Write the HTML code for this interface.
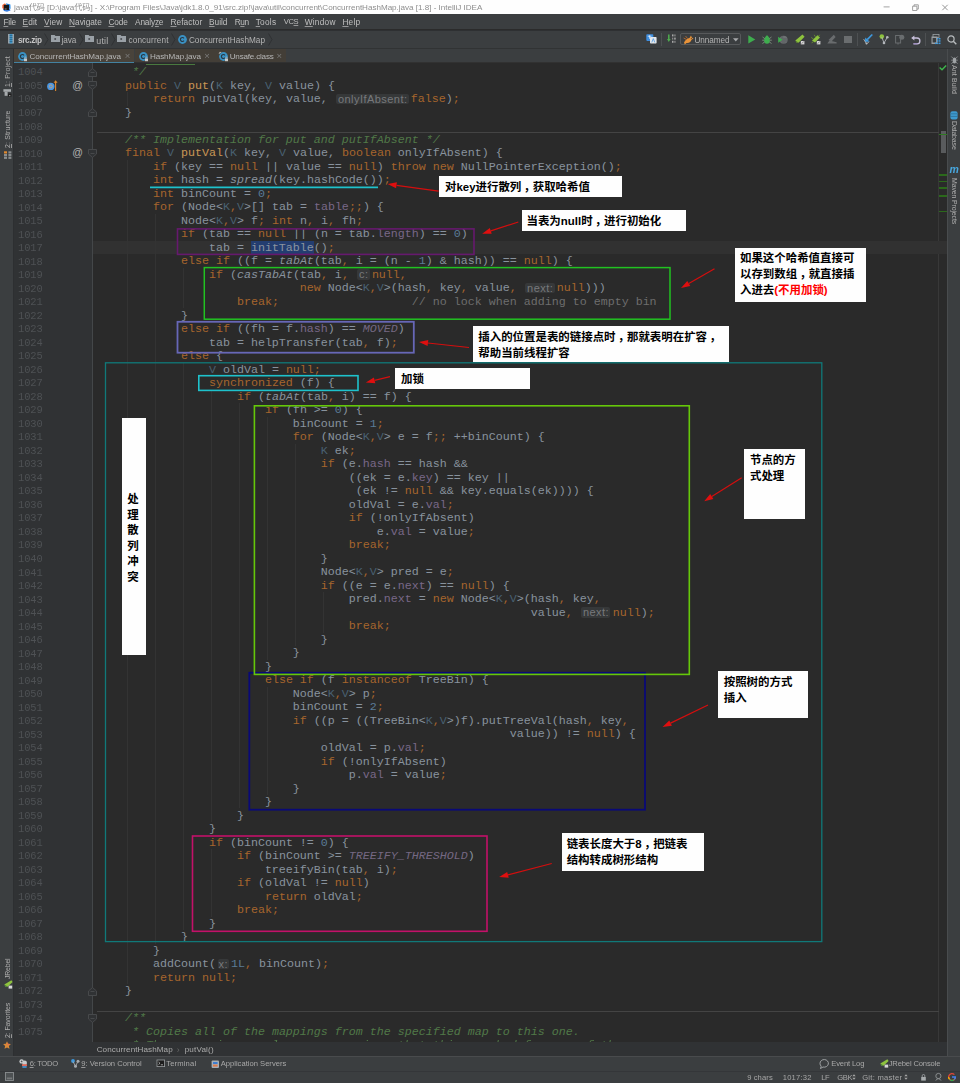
<!DOCTYPE html>
<html lang="zh">
<head>
<meta charset="utf-8">
<title>ConcurrentHashMap.java - IntelliJ IDEA</title>
<style>
*{box-sizing:border-box;margin:0;padding:0}
html,body{width:960px;height:1083px;overflow:hidden;background:#2b2b2b}
body{position:relative;font-family:"Liberation Sans","Noto Sans CJK SC",sans-serif;font-size:8.2px;color:#bbb}
#root{position:absolute;left:0;top:0;width:960px;height:1083px;opacity:.999}
.abs{position:absolute}
.ft{position:absolute;white-space:nowrap;line-height:12px;height:12px}
.ft u,.vt u{text-decoration-thickness:0.7px;text-underline-offset:1px;text-decoration-color:rgba(190,190,190,.7)}
#title{left:0;top:0;width:960px;height:14.2px;background:#fff}
#menu{left:0;top:14.2px;width:960px;height:15.3px;background:#3c3f41}
#nav{left:0;top:29.5px;width:960px;height:19px;background:#3c3f41;border-top:1px solid #2f3133;border-bottom:1px solid #323435}
#tabs{left:0;top:48.5px;width:960px;height:14.2px;background:#3c3f41;border-bottom:1px solid #323232}
.tab{position:absolute;top:0;height:13.4px;background:#4a443c}
#lstrip{left:0;top:48.5px;width:14px;height:1007.5px;background:#3c3f41;border-right:1px solid #2e3032}
#rstrip{left:947px;top:48.5px;width:13px;height:1007.5px;background:#3c3f41;border-left:1px solid #4a4d4f}
.vt{position:absolute;white-space:nowrap;line-height:10px;height:10px;color:#b0b0b0;transform-origin:0 0}
#gutter{left:14px;top:62.7px;width:79px;height:980px;background:#313335;border-right:1px solid #45484a}
#editor{left:93px;top:62.7px;width:846px;height:980px;background:#2b2b2b}
#scroll{left:938.3px;top:62.7px;width:8.7px;height:980px;background:#2b2b2b;border-left:1px solid #393939}
.ln{position:absolute;left:14px;width:28.6px;text-align:right;font-family:"Liberation Mono",monospace;font-size:10.4px;line-height:13.5px;height:13.5px;color:#4f5255;letter-spacing:-0.1px}
.cl{position:absolute;left:97px;font-family:"Liberation Mono",monospace;font-size:11.667px;line-height:13.5px;height:13.5px;color:#a3b0be;white-space:pre;opacity:.79}
.k{color:#c8772f}.t{color:#537186}.m{color:#f2b562}.i{font-style:italic}
.f{color:#8f7aa2}.c{color:#8a7a9c;font-style:italic}.n{color:#6892b4}
.d{color:#5d8f52;font-style:italic}.l{color:#808080}
.s{background:#214283}
.h{display:inline-block;height:13.5px;vertical-align:top;position:relative}
.h b{position:absolute;left:1.6px;right:2.3px;top:0.4px;height:10.6px;background:#3b3d3f;border-radius:2px;color:#8d8f92;font:normal 11px/10.8px "Liberation Sans",sans-serif;letter-spacing:0.45px;text-indent:0.4px;text-align:center;white-space:nowrap}
.fold{position:absolute}
#crumb{left:14px;top:1042px;width:933px;height:14px;background:#313335}
#tools{left:0;top:1056px;width:960px;height:14.5px;background:#3c3f41;border-top:1px solid #4a4c4e}
#status{left:0;top:1070.5px;width:960px;height:12.5px;background:#3c3f41;border-top:1px solid #35373a}
.note{position:absolute;background:#fff;color:#000;font-family:"Liberation Sans","Noto Sans CJK SC",sans-serif;font-weight:bold;font-size:11.45px;line-height:15.75px;white-space:nowrap;box-sizing:content-box}
.cm{position:relative;left:2.5px}
#ov{left:0;top:0;width:960px;height:1083px;pointer-events:none}
.ic{position:absolute;overflow:visible}
</style>
</head>
<body>
<div id="root">
<div id="title" class="abs"></div>
<div id="menu" class="abs"></div>
<div id="nav" class="abs"></div>
<div id="tabs" class="abs">
<div class="tab" style="left:14px;width:120.4px"></div>
<div class="tab" style="left:135px;width:79.5px;background:#443f38"></div>
<div class="tab" style="left:215px;width:71px;background:#443f38"></div>
<div class="abs" style="left:14px;top:13.2px;width:120.4px;height:1.1px;background:#4483a2"></div>
</div>
<div id="lstrip" class="abs"></div>
<div id="rstrip" class="abs"></div>
<div id="gutter" class="abs"></div>
<div id="editor" class="abs"></div>
<div id="scroll" class="abs"></div>
<div class="abs" style="left:93px;top:240.75px;width:854px;height:13.52px;background:#323232"></div>
<div class="abs" style="left:97px;top:131.80px;width:842px;height:1px;background:#454545"></div>
<div class="abs" style="left:97px;top:1011.30px;width:842px;height:1px;background:#454545"></div>
<div class="abs" style="left:126.5px;top:92.18px;width:1px;height:13.52px;background:#343434"></div>
<div class="abs" style="left:126.5px;top:159.75px;width:1px;height:824.41px;background:#343434"></div>
<div class="abs" style="left:154.5px;top:213.82px;width:1px;height:729.81px;background:#343434"></div>
<div class="abs" style="left:182.5px;top:267.88px;width:1px;height:40.55px;background:#343434"></div>
<div class="abs" style="left:182.5px;top:362.48px;width:1px;height:567.63px;background:#343434"></div>
<div class="abs" style="left:210.5px;top:389.51px;width:1px;height:432.48px;background:#343434"></div>
<div class="abs" style="left:238.5px;top:403.02px;width:1px;height:405.45px;background:#343434"></div>
<div class="abs" style="left:266.5px;top:416.54px;width:1px;height:243.27px;background:#343434"></div>
<div class="abs" style="left:294.5px;top:443.57px;width:1px;height:202.72px;background:#343434"></div>
<div class="abs" style="left:322.5px;top:592.24px;width:1px;height:40.54px;background:#343434"></div>
<div class="abs" style="left:266.5px;top:686.84px;width:1px;height:108.12px;background:#343434"></div>
<div class="abs" style="left:210.5px;top:849.02px;width:1px;height:67.58px;background:#343434"></div>
<div class="abs" style="left:146px;top:63.5px;width:49px;height:1px;background:#4a7a40"></div>
<div class="ln" style="top:66.45px">1004</div>
<div class="ln" style="top:79.97px">1005</div>
<div class="ln" style="top:93.48px">1006</div>
<div class="ln" style="top:107.00px">1007</div>
<div class="ln" style="top:120.51px">1008</div>
<div class="ln" style="top:134.03px">1009</div>
<div class="ln" style="top:147.54px">1010</div>
<div class="ln" style="top:161.05px">1011</div>
<div class="ln" style="top:174.57px">1012</div>
<div class="ln" style="top:188.09px">1013</div>
<div class="ln" style="top:201.60px">1014</div>
<div class="ln" style="top:215.12px">1015</div>
<div class="ln" style="top:228.63px">1016</div>
<div class="ln" style="top:242.14px">1017</div>
<div class="ln" style="top:255.66px">1018</div>
<div class="ln" style="top:269.18px">1019</div>
<div class="ln" style="top:282.69px">1020</div>
<div class="ln" style="top:296.20px">1021</div>
<div class="ln" style="top:309.72px">1022</div>
<div class="ln" style="top:323.24px">1023</div>
<div class="ln" style="top:336.75px">1024</div>
<div class="ln" style="top:350.27px">1025</div>
<div class="ln" style="top:363.78px">1026</div>
<div class="ln" style="top:377.30px">1027</div>
<div class="ln" style="top:390.81px">1028</div>
<div class="ln" style="top:404.32px">1029</div>
<div class="ln" style="top:417.84px">1030</div>
<div class="ln" style="top:431.36px">1031</div>
<div class="ln" style="top:444.87px">1032</div>
<div class="ln" style="top:458.39px">1033</div>
<div class="ln" style="top:471.90px">1034</div>
<div class="ln" style="top:485.42px">1035</div>
<div class="ln" style="top:498.93px">1036</div>
<div class="ln" style="top:512.45px">1037</div>
<div class="ln" style="top:525.96px">1038</div>
<div class="ln" style="top:539.48px">1039</div>
<div class="ln" style="top:552.99px">1040</div>
<div class="ln" style="top:566.51px">1041</div>
<div class="ln" style="top:580.02px">1042</div>
<div class="ln" style="top:593.54px">1043</div>
<div class="ln" style="top:607.05px">1044</div>
<div class="ln" style="top:620.57px">1045</div>
<div class="ln" style="top:634.08px">1046</div>
<div class="ln" style="top:647.60px">1047</div>
<div class="ln" style="top:661.11px">1048</div>
<div class="ln" style="top:674.63px">1049</div>
<div class="ln" style="top:688.14px">1050</div>
<div class="ln" style="top:701.66px">1051</div>
<div class="ln" style="top:715.17px">1052</div>
<div class="ln" style="top:728.69px">1053</div>
<div class="ln" style="top:742.20px">1054</div>
<div class="ln" style="top:755.72px">1055</div>
<div class="ln" style="top:769.23px">1056</div>
<div class="ln" style="top:782.75px">1057</div>
<div class="ln" style="top:796.26px">1058</div>
<div class="ln" style="top:809.78px">1059</div>
<div class="ln" style="top:823.29px">1060</div>
<div class="ln" style="top:836.81px">1061</div>
<div class="ln" style="top:850.32px">1062</div>
<div class="ln" style="top:863.84px">1063</div>
<div class="ln" style="top:877.35px">1064</div>
<div class="ln" style="top:890.87px">1065</div>
<div class="ln" style="top:904.38px">1066</div>
<div class="ln" style="top:917.90px">1067</div>
<div class="ln" style="top:931.41px">1068</div>
<div class="ln" style="top:944.93px">1069</div>
<div class="ln" style="top:958.44px">1070</div>
<div class="ln" style="top:971.96px">1071</div>
<div class="ln" style="top:985.47px">1072</div>
<div class="ln" style="top:998.99px">1073</div>
<div class="ln" style="top:1012.50px">1074</div>
<div class="ln" style="top:1026.02px">1075</div>
<div class="ln" style="top:1039.53px">1076</div>
<svg class="fold" style="left:88px;top:67.61px" width="9" height="9" viewBox="0 0 9 9"><path d="M0.5,8.5 H8.5 V4 L4.5,0.5 L0.5,4 Z" fill="#313335" stroke="#484a4c" stroke-width="1"/><path d="M2.5,4.5 H6.5" stroke="#484a4c" stroke-width="1"/></svg>
<svg class="fold" style="left:88px;top:81.23px" width="9" height="9" viewBox="0 0 9 9"><path d="M0.5,0.5 H8.5 V5 L4.5,8.5 L0.5,5 Z" fill="#313335" stroke="#484a4c" stroke-width="1"/><path d="M2.5,4.5 H6.5" stroke="#484a4c" stroke-width="1"/></svg>
<svg class="fold" style="left:88px;top:108.15px" width="9" height="9" viewBox="0 0 9 9"><path d="M0.5,8.5 H8.5 V4 L4.5,0.5 L0.5,4 Z" fill="#313335" stroke="#484a4c" stroke-width="1"/><path d="M2.5,4.5 H6.5" stroke="#484a4c" stroke-width="1"/></svg>
<svg class="fold" style="left:88px;top:148.86px" width="9" height="9" viewBox="0 0 9 9"><path d="M0.5,0.5 H8.5 V5 L4.5,8.5 L0.5,5 Z" fill="#313335" stroke="#484a4c" stroke-width="1"/><path d="M2.5,4.5 H6.5" stroke="#484a4c" stroke-width="1"/></svg>
<svg class="fold" style="left:88px;top:986.63px" width="9" height="9" viewBox="0 0 9 9"><path d="M0.5,8.5 H8.5 V4 L4.5,0.5 L0.5,4 Z" fill="#313335" stroke="#484a4c" stroke-width="1"/><path d="M2.5,4.5 H6.5" stroke="#484a4c" stroke-width="1"/></svg>
<svg class="fold" style="left:88px;top:1014.46px" width="9" height="9" viewBox="0 0 9 9"><path d="M0.5,0.5 H8.5 V5 L4.5,8.5 L0.5,5 Z" fill="#313335" stroke="#484a4c" stroke-width="1"/><path d="M2.5,4.5 H6.5" stroke="#484a4c" stroke-width="1"/></svg>
<pre class="cl" style="top:66.25px">     <span class="d">*/</span></pre>
<pre class="cl" style="top:79.77px">    <span class="k">public</span> <span class="t">V</span> <span class="m">put</span>(<span class="t">K</span> key, <span class="t">V</span> value) {</pre>
<pre class="cl" style="top:93.28px">        <span class="k">return</span> putVal(key, value, <span class="h" style="width:76px"><b>onlyIfAbsent:</b></span><span class="k">false</span>)<span class="k">;</span></pre>
<pre class="cl" style="top:106.80px">    }</pre>
<pre class="cl" style="top:133.83px">    <span class="d">/** Implementation for put and putIfAbsent */</span></pre>
<pre class="cl" style="top:147.34px">    <span class="k">final</span> <span class="t">V</span> <span class="m">putVal</span>(<span class="t">K</span> key, <span class="t">V</span> value, <span class="k">boolean</span> onlyIfAbsent) {</pre>
<pre class="cl" style="top:160.85px">        <span class="k">if</span> (key == <span class="k">null</span> || value == <span class="k">null</span>) <span class="k">throw new</span> NullPointerException()<span class="k">;</span></pre>
<pre class="cl" style="top:174.37px">        <span class="k">int</span> hash = <span class="i">spread</span>(key.hashCode())<span class="k">;</span></pre>
<pre class="cl" style="top:187.89px">        <span class="k">int</span> binCount = <span class="n">0</span><span class="k">;</span></pre>
<pre class="cl" style="top:201.40px">        <span class="k">for</span> (Node&lt;<span class="t">K</span><span class="k">,</span><span class="t">V</span>&gt;[] tab = <span class="f">table</span><span class="k">;;</span>) {</pre>
<pre class="cl" style="top:214.92px">            Node&lt;<span class="t">K</span><span class="k">,</span><span class="t">V</span>&gt; f<span class="k">;</span> <span class="k">int</span> n<span class="k">,</span> i<span class="k">,</span> fh<span class="k">;</span></pre>
<pre class="cl" style="top:228.43px">            <span class="k">if</span> (tab == <span class="k">null</span> || (n = tab.<span class="f">length</span>) == <span class="n">0</span>)</pre>
<pre class="cl" style="top:241.94px">                tab = <span class="s">initTable</span>()<span class="k">;</span></pre>
<pre class="cl" style="top:255.46px">            <span class="k">else if</span> ((f = <span class="i">tabAt</span>(tab<span class="k">,</span> i = (n - <span class="n">1</span>) &amp; hash)) == <span class="k">null</span>) {</pre>
<pre class="cl" style="top:268.98px">                <span class="k">if</span> (<span class="i">casTabAt</span>(tab<span class="k">,</span> i<span class="k">,</span> <span class="h" style="width:16px"><b>c:</b></span><span class="k">null,</span></pre>
<pre class="cl" style="top:282.49px">                             <span class="k">new</span> Node&lt;<span class="t">K</span><span class="k">,</span><span class="t">V</span>&gt;(hash<span class="k">,</span> key<span class="k">,</span> value<span class="k">,</span> <span class="h" style="width:33px"><b>next:</b></span><span class="k">null</span>)))</pre>
<pre class="cl" style="top:296.00px">                    <span class="k">break;</span>                   <span class="l">// no lock when adding to empty bin</span></pre>
<pre class="cl" style="top:309.52px">            }</pre>
<pre class="cl" style="top:323.04px">            <span class="k">else if</span> ((fh = f.<span class="f">hash</span>) == <span class="c">MOVED</span>)</pre>
<pre class="cl" style="top:336.55px">                tab = helpTransfer(tab<span class="k">,</span> f)<span class="k">;</span></pre>
<pre class="cl" style="top:350.07px">            <span class="k">else</span> {</pre>
<pre class="cl" style="top:363.58px">                <span class="t">V</span> oldVal = <span class="k">null;</span></pre>
<pre class="cl" style="top:377.10px">                <span class="k">synchronized</span> (f) {</pre>
<pre class="cl" style="top:390.61px">                    <span class="k">if</span> (<span class="i">tabAt</span>(tab<span class="k">,</span> i) == f) {</pre>
<pre class="cl" style="top:404.12px">                        <span class="k">if</span> (fh &gt;= <span class="n">0</span>) {</pre>
<pre class="cl" style="top:417.64px">                            binCount = <span class="n">1</span><span class="k">;</span></pre>
<pre class="cl" style="top:431.16px">                            <span class="k">for</span> (Node&lt;<span class="t">K</span><span class="k">,</span><span class="t">V</span>&gt; e = f<span class="k">;;</span> ++binCount) {</pre>
<pre class="cl" style="top:444.67px">                                <span class="t">K</span> ek<span class="k">;</span></pre>
<pre class="cl" style="top:458.19px">                                <span class="k">if</span> (e.<span class="f">hash</span> == hash &amp;&amp;</pre>
<pre class="cl" style="top:471.70px">                                    ((ek = e.<span class="f">key</span>) == key ||</pre>
<pre class="cl" style="top:485.22px">                                     (ek != <span class="k">null</span> &amp;&amp; key.equals(ek)))) {</pre>
<pre class="cl" style="top:498.73px">                                    oldVal = e.<span class="f">val</span><span class="k">;</span></pre>
<pre class="cl" style="top:512.25px">                                    <span class="k">if</span> (!onlyIfAbsent)</pre>
<pre class="cl" style="top:525.76px">                                        e.<span class="f">val</span> = value<span class="k">;</span></pre>
<pre class="cl" style="top:539.28px">                                    <span class="k">break;</span></pre>
<pre class="cl" style="top:552.79px">                                }</pre>
<pre class="cl" style="top:566.31px">                                Node&lt;<span class="t">K</span><span class="k">,</span><span class="t">V</span>&gt; pred = e<span class="k">;</span></pre>
<pre class="cl" style="top:579.82px">                                <span class="k">if</span> ((e = e.<span class="f">next</span>) == <span class="k">null</span>) {</pre>
<pre class="cl" style="top:593.34px">                                    pred.<span class="f">next</span> = <span class="k">new</span> Node&lt;<span class="t">K</span><span class="k">,</span><span class="t">V</span>&gt;(hash<span class="k">,</span> key<span class="k">,</span></pre>
<pre class="cl" style="top:606.85px">                                                              value<span class="k">,</span> <span class="h" style="width:33px"><b>next:</b></span><span class="k">null</span>)<span class="k">;</span></pre>
<pre class="cl" style="top:620.37px">                                    <span class="k">break;</span></pre>
<pre class="cl" style="top:633.88px">                                }</pre>
<pre class="cl" style="top:647.39px">                            }</pre>
<pre class="cl" style="top:660.91px">                        }</pre>
<pre class="cl" style="top:674.43px">                        <span class="k">else if</span> (f <span class="k">instanceof</span> TreeBin) {</pre>
<pre class="cl" style="top:687.94px">                            Node&lt;<span class="t">K</span><span class="k">,</span><span class="t">V</span>&gt; p<span class="k">;</span></pre>
<pre class="cl" style="top:701.46px">                            binCount = <span class="n">2</span><span class="k">;</span></pre>
<pre class="cl" style="top:714.97px">                            <span class="k">if</span> ((p = ((TreeBin&lt;<span class="t">K</span><span class="k">,</span><span class="t">V</span>&gt;)f).putTreeVal(hash<span class="k">,</span> key<span class="k">,</span></pre>
<pre class="cl" style="top:728.49px">                                                           value)) != <span class="k">null</span>) {</pre>
<pre class="cl" style="top:742.00px">                                oldVal = p.<span class="f">val</span><span class="k">;</span></pre>
<pre class="cl" style="top:755.51px">                                <span class="k">if</span> (!onlyIfAbsent)</pre>
<pre class="cl" style="top:769.03px">                                    p.<span class="f">val</span> = value<span class="k">;</span></pre>
<pre class="cl" style="top:782.55px">                            }</pre>
<pre class="cl" style="top:796.06px">                        }</pre>
<pre class="cl" style="top:809.58px">                    }</pre>
<pre class="cl" style="top:823.09px">                }</pre>
<pre class="cl" style="top:836.61px">                <span class="k">if</span> (binCount != <span class="n">0</span>) {</pre>
<pre class="cl" style="top:850.12px">                    <span class="k">if</span> (binCount &gt;= <span class="c">TREEIFY_THRESHOLD</span>)</pre>
<pre class="cl" style="top:863.63px">                        treeifyBin(tab<span class="k">,</span> i)<span class="k">;</span></pre>
<pre class="cl" style="top:877.15px">                    <span class="k">if</span> (oldVal != <span class="k">null</span>)</pre>
<pre class="cl" style="top:890.67px">                        <span class="k">return</span> oldVal<span class="k">;</span></pre>
<pre class="cl" style="top:904.18px">                    <span class="k">break;</span></pre>
<pre class="cl" style="top:917.70px">                }</pre>
<pre class="cl" style="top:931.21px">            }</pre>
<pre class="cl" style="top:944.73px">        }</pre>
<pre class="cl" style="top:958.24px">        addCount(<span class="h" style="width:15px"><b>x:</b></span><span class="n">1L</span><span class="k">,</span> binCount)<span class="k">;</span></pre>
<pre class="cl" style="top:971.75px">        <span class="k">return null;</span></pre>
<pre class="cl" style="top:985.27px">    }</pre>
<pre class="cl" style="top:1012.30px">    <span class="d">/**</span></pre>
<pre class="cl" style="top:1025.82px">     <span class="d">* Copies all of the mappings from the specified map to this one.</span></pre>
<pre class="cl" style="top:1039.33px">     <span class="d">* These mappings replace any mappings that this map had for any of the</span></pre>
<div id="crumb" class="abs"></div>
<div id="tools" class="abs"></div>
<div id="status" class="abs"></div>
<span class="ft" style="left:13.90px;top:1.80px;font-size:8.1px;letter-spacing:-0.023px;color:#8e8e8e;">java代码 [D:\java代码] - X:\Program Files\Java\jdk1.8.0_91\src.zip!\java\util\concurrent\ConcurrentHashMap.java [1.8] - IntelliJ IDEA</span>
<span class="ft" style="left:3.45px;top:15.60px;font-size:8.3px;letter-spacing:-0.235px;color:#c0c0c0;"><u>F</u>ile</span>
<span class="ft" style="left:22.60px;top:15.60px;font-size:8.3px;letter-spacing:0.072px;color:#c0c0c0;"><u>E</u>dit</span>
<span class="ft" style="left:44.10px;top:15.60px;font-size:8.3px;letter-spacing:0.089px;color:#c0c0c0;"><u>V</u>iew</span>
<span class="ft" style="left:69.10px;top:15.60px;font-size:8.3px;letter-spacing:-0.008px;color:#c0c0c0;"><u>N</u>avigate</span>
<span class="ft" style="left:108.45px;top:15.60px;font-size:8.3px;letter-spacing:-0.123px;color:#c0c0c0;"><u>C</u>ode</span>
<span class="ft" style="left:135.10px;top:15.60px;font-size:8.3px;letter-spacing:-0.192px;color:#c0c0c0;">Analy<u>z</u>e</span>
<span class="ft" style="left:170.50px;top:15.60px;font-size:8.3px;letter-spacing:0.053px;color:#c0c0c0;"><u>R</u>efactor</span>
<span class="ft" style="left:209.10px;top:15.60px;font-size:8.3px;letter-spacing:-0.054px;color:#c0c0c0;"><u>B</u>uild</span>
<span class="ft" style="left:234.70px;top:15.60px;font-size:8.3px;letter-spacing:-0.383px;color:#c0c0c0;">R<u>u</u>n</span>
<span class="ft" style="left:255.70px;top:15.60px;font-size:8.3px;letter-spacing:0.242px;color:#c0c0c0;"><u>T</u>ools</span>
<span class="ft" style="left:283.70px;top:15.60px;font-size:7.64px;letter-spacing:-0.373px;color:#c0c0c0;">VC<u>S</u></span>
<span class="ft" style="left:304.70px;top:15.60px;font-size:8.3px;letter-spacing:0.245px;color:#c0c0c0;"><u>W</u>indow</span>
<span class="ft" style="left:342.40px;top:15.60px;font-size:8.3px;letter-spacing:0.205px;color:#c0c0c0;"><u>H</u>elp</span>
<span class="ft" style="left:18.00px;top:34.50px;font-size:8.2px;letter-spacing:-0.343px;color:#c8c8c8;font-weight:bold">src.zip</span>
<span class="ft" style="left:61.60px;top:34.50px;font-size:8.2px;letter-spacing:-0.083px;color:#b4b4b4;">java</span>
<span class="ft" style="left:96.20px;top:34.50px;font-size:8.86px;letter-spacing:0.272px;color:#b4b4b4;">util</span>
<span class="ft" style="left:128.45px;top:34.50px;font-size:8.2px;letter-spacing:0.146px;color:#b4b4b4;">concurrent</span>
<span class="ft" style="left:188.90px;top:34.50px;font-size:8.2px;letter-spacing:0.033px;color:#b4b4b4;">ConcurrentHashMap</span>
<span class="ft" style="left:694.40px;top:34.50px;font-size:8.2px;letter-spacing:-0.059px;color:#b4b4b4;">Unnamed</span>
<span class="ft" style="left:29.50px;top:50.60px;font-size:8.1px;letter-spacing:-0.008px;color:#b8b8b8;">ConcurrentHashMap.java</span>
<span class="ft" style="left:124.70px;top:50.40px;font-size:9.5px;letter-spacing:0.037px;color:#7c7c7c;">×</span>
<span class="ft" style="left:149.90px;top:50.60px;font-size:8.1px;letter-spacing:-0.054px;color:#b8b8b8;">HashMap.java</span>
<span class="ft" style="left:204.20px;top:50.40px;font-size:9.5px;letter-spacing:0.037px;color:#7c7c7c;">×</span>
<span class="ft" style="left:229.70px;top:50.60px;font-size:8.1px;letter-spacing:-0.204px;color:#b8b8b8;">Unsafe.class</span>
<span class="ft" style="left:276.40px;top:50.40px;font-size:9.5px;letter-spacing:0.037px;color:#7c7c7c;">×</span>
<span class="ft" style="left:96.70px;top:1044.20px;font-size:8.1px;letter-spacing:0.083px;color:#adadad;">ConcurrentHashMap</span>
<span class="ft" style="left:176.70px;top:1044.00px;font-size:8.5px;letter-spacing:0.756px;color:#6a6a6a;">›</span>
<span class="ft" style="left:184.70px;top:1044.20px;font-size:8.1px;letter-spacing:0.169px;color:#adadad;">putVal()</span>
<span class="ft" style="left:29.70px;top:1058.30px;font-size:7.6px;letter-spacing:-0.289px;color:#aaaaaa;"><u>6</u>: TODO</span>
<span class="ft" style="left:81.20px;top:1058.30px;font-size:7.6px;letter-spacing:0.013px;color:#aaaaaa;"><u>9</u>: Version Control</span>
<span class="ft" style="left:166.20px;top:1058.30px;font-size:7.6px;letter-spacing:0.175px;color:#aaaaaa;">Terminal</span>
<span class="ft" style="left:220.70px;top:1058.30px;font-size:7.6px;letter-spacing:0.009px;color:#aaaaaa;">Application Servers</span>
<span class="ft" style="left:831.20px;top:1058.30px;font-size:7.6px;letter-spacing:-0.123px;color:#aaaaaa;">Event Log</span>
<span class="ft" style="left:888.70px;top:1058.30px;font-size:7.6px;letter-spacing:-0.144px;color:#aaaaaa;">JRebel Console</span>
<span class="ft" style="left:747.20px;top:1071.70px;font-size:7.6px;letter-spacing:0.099px;color:#a8a8a8;">9 chars</span>
<span class="ft" style="left:782.70px;top:1071.70px;font-size:7.6px;letter-spacing:0.235px;color:#a8a8a8;">1017:32</span>
<span class="ft" style="left:821.20px;top:1071.70px;font-size:7.6px;letter-spacing:-0.388px;color:#a8a8a8;">LF</span>
<span class="ft" style="left:837.20px;top:1071.70px;font-size:7.6px;letter-spacing:-0.316px;color:#a8a8a8;">GBK</span>
<span class="ft" style="left:862.20px;top:1071.70px;font-size:7.6px;letter-spacing:0.269px;color:#a8a8a8;">Git: master</span>
<span class="vt" style="left:2.60px;top:86.60px;font-size:7px;letter-spacing:0.131px;transform:rotate(-90deg)"><u>1</u>: Project</span>
<span class="vt" style="left:2.60px;top:148.30px;font-size:7px;letter-spacing:0.116px;transform:rotate(-90deg)"><u>2</u>: Structure</span>
<span class="vt" style="left:2.60px;top:979.00px;font-size:7px;letter-spacing:-0.233px;transform:rotate(-90deg)">JRebel</span>
<span class="vt" style="left:2.60px;top:1038.30px;font-size:7px;letter-spacing:-0.124px;transform:rotate(-90deg)"><u>2</u>: Favorites</span>
<span class="vt" style="left:958.80px;top:65.20px;font-size:7px;letter-spacing:0.108px;transform:rotate(90deg)">Ant Build</span>
<span class="vt" style="left:958.80px;top:120.70px;font-size:7px;letter-spacing:-0.171px;transform:rotate(90deg)">Database</span>
<span class="vt" style="left:958.80px;top:178.20px;font-size:7px;letter-spacing:-0.154px;transform:rotate(90deg)">Maven Projects</span>
<!-- title bar icon -->
<svg class="ic" style="left:2px;top:2.6px" width="9" height="9" viewBox="0 0 9 9"><path d="M0.3,2 L3,0.3 L4.5,2.5 L2,6.5 L0.3,5 Z" fill="#f56b3c"/><path d="M4,0.3 L8.4,1.6 L8.6,6 L5,3.5 Z" fill="#2a8ee8"/><path d="M1,6 L7.5,5 L8.5,7.5 L5,8.8 L2,8 Z" fill="#3a7fe0"/><rect x="1.8" y="1.8" width="5.2" height="5.2" fill="#1a1a1a"/><rect x="2.6" y="5.7" width="2" height="0.6" fill="#ddd"/></svg>
<!-- window buttons -->
<svg class="ic" style="left:880px;top:0" width="80" height="15" viewBox="0 0 80 15"><path d="M3.6,6.9 H9.6" stroke="#9a9a9a" stroke-width="0.9"/><path d="M32.6,6.2 h4.3 v4.3 h-4.3 z M34,6.2 v-1.4 h4.3 v4.3 h-1.4" stroke="#8c8c8c" stroke-width="0.8" fill="none"/><path d="M62.3,4.8 l5.4,5.4 M67.7,4.8 l-5.4,5.4" stroke="#8c8c8c" stroke-width="0.9"/></svg>
<!-- nav bar icons -->
<svg class="ic" style="left:8px;top:34.3px" width="6" height="10" viewBox="0 0 6 10"><rect x="0" y="0" width="6" height="9.5" fill="#9aa3a9"/><rect x="1.6" y="0" width="2.8" height="9.5" fill="#3d93c6"/><path d="M1.6,1.5 h2.8 M1.6,3.5 h2.8 M1.6,5.5 h2.8 M1.6,7.5 h2.8" stroke="#2a5f80" stroke-width="0.7"/></svg>
<svg class="ic" style="left:44px;top:33px" width="5" height="13" viewBox="0 0 5 13"><path d="M0.5,0.5 L4,6.5 L0.5,12.5" fill="none" stroke="#2f3133" stroke-width="0.9"/></svg>
<svg class="ic" style="left:79px;top:33px" width="5" height="13" viewBox="0 0 5 13"><path d="M0.5,0.5 L4,6.5 L0.5,12.5" fill="none" stroke="#2f3133" stroke-width="0.9"/></svg>
<svg class="ic" style="left:111px;top:33px" width="5" height="13" viewBox="0 0 5 13"><path d="M0.5,0.5 L4,6.5 L0.5,12.5" fill="none" stroke="#2f3133" stroke-width="0.9"/></svg>
<svg class="ic" style="left:171px;top:33px" width="5" height="13" viewBox="0 0 5 13"><path d="M0.5,0.5 L4,6.5 L0.5,12.5" fill="none" stroke="#2f3133" stroke-width="0.9"/></svg>
<svg class="ic" style="left:267.5px;top:33px" width="5" height="13" viewBox="0 0 5 13"><path d="M0.5,0.5 L4,6.5 L0.5,12.5" fill="none" stroke="#2f3133" stroke-width="0.9"/></svg>
<svg class="ic" style="left:50.5px;top:35.3px" width="9" height="7" viewBox="0 0 9 7"><path d="M0,0 H3.6 L4.5,1 H9 V7 H0 Z" fill="#9ba2a8"/><circle cx="4.2" cy="4" r="1" fill="#4a4e52"/></svg>
<svg class="ic" style="left:85px;top:35.3px" width="9" height="7" viewBox="0 0 9 7"><path d="M0,0 H3.6 L4.5,1 H9 V7 H0 Z" fill="#9ba2a8"/><circle cx="4.2" cy="4" r="1" fill="#4a4e52"/></svg>
<svg class="ic" style="left:117px;top:35.3px" width="9" height="7" viewBox="0 0 9 7"><path d="M0,0 H3.6 L4.5,1 H9 V7 H0 Z" fill="#9ba2a8"/><circle cx="4.2" cy="4" r="1" fill="#4a4e52"/></svg>
<svg class="ic" style="left:177.6px;top:35px" width="9" height="9" viewBox="0 0 9 9"><circle cx="4.5" cy="4.5" r="4.4" fill="#3b92c4"/><path d="M6,3.3 A2,2 0 1 0 6,5.7" fill="none" stroke="#2a3a46" stroke-width="1.1"/></svg>
<!-- tab icons -->
<svg class="ic" style="left:18.4px;top:51.5px" width="10" height="10" viewBox="0 0 10 10"><circle cx="4.5" cy="4.5" r="4.4" fill="#3b92c4"/><path d="M6,3.3 A2,2 0 1 0 6,5.7" fill="none" stroke="#2a3a46" stroke-width="1.1"/><rect x="6" y="6.6" width="3" height="2.6" fill="#c8c8c8"/><path d="M6.7,6.6 v-0.8 a0.8,0.8 0 0 1 1.6,0 v0.8" fill="none" stroke="#c8c8c8" stroke-width="0.6"/></svg>
<svg class="ic" style="left:139.2px;top:51.5px" width="10" height="10" viewBox="0 0 10 10"><circle cx="4.5" cy="4.5" r="4.4" fill="#3b92c4"/><path d="M6,3.3 A2,2 0 1 0 6,5.7" fill="none" stroke="#2a3a46" stroke-width="1.1"/><rect x="6" y="6.6" width="3" height="2.6" fill="#c8c8c8"/><path d="M6.7,6.6 v-0.8 a0.8,0.8 0 0 1 1.6,0 v0.8" fill="none" stroke="#c8c8c8" stroke-width="0.6"/></svg>
<svg class="ic" style="left:218.6px;top:51.5px" width="10" height="10" viewBox="0 0 10 10"><circle cx="4.5" cy="4.5" r="4.4" fill="#3b92c4"/><path d="M6,3.3 A2,2 0 1 0 6,5.7" fill="none" stroke="#2a3a46" stroke-width="1.1"/><rect x="6" y="6.6" width="3" height="2.6" fill="#c8c8c8"/><path d="M6.7,6.6 v-0.8 a0.8,0.8 0 0 1 1.6,0 v0.8" fill="none" stroke="#c8c8c8" stroke-width="0.6"/><path d="M0.2,1.8 a1.5,1.5 0 0 1 2,-1.4" fill="none" stroke="#d8d8d8" stroke-width="0.8"/></svg>
<!-- toolbar icons (right part of nav bar) -->
<svg class="ic" style="left:646px;top:33.8px" width="11" height="10" viewBox="0 0 11 10"><rect x="0.3" y="0.3" width="7" height="6.6" rx="0.8" fill="#3f8fe0"/><rect x="4" y="3" width="6.6" height="6.6" rx="0.8" fill="#e4e8ec"/><path d="M1.8,2.2 h3.6 M3.6,1.4 v3.4" stroke="#fff" stroke-width="0.7"/><path d="M5.8,8.4 l1.5,-3.8 l1.5,3.8" stroke="#3f8fe0" stroke-width="0.7" fill="none"/></svg>
<div class="abs" style="left:661.4px;top:33px;width:1px;height:13px;background:#4e5153"></div>
<svg class="ic" style="left:667px;top:34px" width="10" height="10" viewBox="0 0 10 10"><path d="M1.8,0.5 v5" stroke="#4fae4f" stroke-width="1.5"/><path d="M0,5 h3.6 l-1.8,3 z" fill="#4fae4f"/><g fill="#a8a8a8"><rect x="5" y="0.4" width="1.5" height="2"/><rect x="7.5" y="0.4" width="0.9" height="2"/><rect x="5.3" y="3.6" width="0.9" height="2"/><rect x="7.2" y="3.6" width="1.5" height="2"/><rect x="5" y="6.8" width="1.5" height="2"/><rect x="7.5" y="6.8" width="0.9" height="2"/></g></svg>
<div class="abs" style="left:680.3px;top:33px;width:61px;height:12.4px;border:1px solid #585a5c;border-radius:2px"></div>
<svg class="ic" style="left:683px;top:34.5px" width="11" height="10" viewBox="0 0 11 10"><path d="M1,7.5 C2.5,5 4,3.5 6.5,3 L8,0.6 L8.8,2.6 L10.5,3.6 L8.5,4.8 C8,7 6,8.5 3.5,8 L1.8,9.5 Z" fill="#e8933a"/><path d="M0.6,3 L3.5,4.5 M2.5,1 L4.6,3.6" stroke="#c8702a" stroke-width="0.8"/><circle cx="8.3" cy="3.5" r="0.5" fill="#3c3f41"/></svg>
<svg class="ic" style="left:733px;top:37.5px" width="6" height="4" viewBox="0 0 6 4"><path d="M0,0.3 H5.6 L2.8,3.6 Z" fill="#a8aaac"/></svg>
<svg class="ic" style="left:748px;top:35px" width="8" height="9" viewBox="0 0 8 9"><path d="M0.3,0.2 L7.3,4.4 L0.3,8.6 Z" fill="#3fae4f"/></svg>
<svg class="ic" style="left:762px;top:34.5px" width="10" height="10" viewBox="0 0 10 10"><ellipse cx="5" cy="5.2" rx="2.9" ry="3.6" fill="#3fae4f"/><path d="M0.5,2 L2.6,3.6 M9.5,2 L7.4,3.6 M0.2,5.2 H2 M9.8,5.2 H8 M0.5,8.5 L2.6,7 M9.5,8.5 L7.4,7" stroke="#8a9a8a" stroke-width="0.8"/><circle cx="5" cy="1.8" r="1.3" fill="#3fae4f"/></svg>
<svg class="ic" style="left:778.3px;top:34.8px" width="10" height="10" viewBox="0 0 10 10"><circle cx="5.6" cy="4.8" r="4" fill="#6e7274"/><path d="M3.2,2 L5.2,2 M2.8,4 L8.8,4 M2.6,6 L9,6 M3.6,8 L7.6,8" stroke="#505456" stroke-width="0.7"/><path d="M0.2,1.8 L4.6,4.8 L0.2,7.8 Z" fill="#3fae4f"/></svg>
<svg class="ic" style="left:795px;top:34px" width="10" height="11" viewBox="0 0 10 11"><path d="M0.3,6.5 L7.5,0.4 L9.6,2.8 L3.5,8.8 Z" fill="#8fc43f"/><path d="M0.3,6.5 L1.5,8.8 L3.5,8.8 Z" fill="#6e9e2e"/><rect x="5.8" y="7" width="3.6" height="3.4" fill="#d8d8d8"/><path d="M6.5,9.6 L8.8,7.6" stroke="#555" stroke-width="0.6"/></svg>
<svg class="ic" style="left:811px;top:34px" width="10" height="11" viewBox="0 0 10 11"><path d="M1,6.5 L6.5,1.2 L9,3.5 L4,8.6 Z" fill="#8fc43f"/><path d="M0.2,3.5 L2.5,5 M0.6,8.8 L2.6,7.6 M3.2,0.8 L4.4,2.8 M8.6,0.8 L7.6,2.2" stroke="#6e9e2e" stroke-width="0.8"/><rect x="5.8" y="7" width="3.6" height="3.4" fill="#d8d8d8"/><path d="M6.5,9.6 L8.8,7.6" stroke="#555" stroke-width="0.6"/></svg>
<svg class="ic" style="left:826.8px;top:34px" width="10" height="11" viewBox="0 0 10 11"><path d="M1.5,6 L6.8,0.8 L8.6,3 L4.5,7.5 Z" fill="#6a6d6f"/><path d="M0.3,9.6 L2.5,6.6 L9.6,8.2 L9.6,9.6 Z" fill="#6a6d6f"/></svg>
<div class="abs" style="left:843.7px;top:35.6px;width:8px;height:7.8px;background:#6b6e70"></div>
<div class="abs" style="left:857px;top:33px;width:1px;height:13px;background:#4e5153"></div>
<svg class="ic" style="left:863px;top:34px" width="10" height="11" viewBox="0 0 10 11"><path d="M9.3,0.5 L4.2,5.6" stroke="#3f9be0" stroke-width="1.6"/><path d="M2.2,3.6 L6.6,7.6 L2,8 Z" fill="#3f9be0"/><path d="M0.6,5 L3.5,9.8 L6.2,7.8" fill="none" stroke="#b4b8bc" stroke-width="0.8"/><circle cx="3.5" cy="9.6" r="1" fill="#b4b8bc"/></svg>
<svg class="ic" style="left:878.5px;top:34px" width="10" height="11" viewBox="0 0 10 11"><circle cx="2.8" cy="2.6" r="2.3" fill="#8fc43f"/><circle cx="8.3" cy="3.3" r="1.3" fill="#b4b8bc"/><circle cx="5" cy="9" r="1.3" fill="#b4b8bc"/><path d="M2.8,3 L5,9 L8.3,3.3" fill="none" stroke="#b4b8bc" stroke-width="0.9"/></svg>
<svg class="ic" style="left:895px;top:34px" width="10" height="11" viewBox="0 0 10 11"><rect x="0.6" y="1.5" width="5" height="7.5" fill="none" stroke="#6a6e70" stroke-width="1"/><circle cx="6.8" cy="3.2" r="2.5" fill="#6a6e70"/><path d="M3,9 v1.6" stroke="#6a6e70" stroke-width="1"/></svg>
<svg class="ic" style="left:911px;top:34.5px" width="10" height="10" viewBox="0 0 10 10"><path d="M1.8,3 H6 A2.9,2.9 0 0 1 6,8.8 H2.4" fill="none" stroke="#c8c0dc" stroke-width="1.3"/><path d="M0.2,3 L3.4,0.5 L3.4,5.5 Z" fill="#c8c0dc"/><path d="M2.4,8.8 H6.5" stroke="#9a7fc8" stroke-width="0.8"/></svg>
<div class="abs" style="left:925.2px;top:33px;width:1px;height:13px;background:#4e5153"></div>
<svg class="ic" style="left:930.8px;top:34px" width="10" height="11" viewBox="0 0 10 11"><rect x="0.5" y="2.5" width="6" height="7.5" fill="#9aa0a4"/><rect x="2" y="0.5" width="6" height="3" fill="none" stroke="#9aa0a4" stroke-width="0.8"/><rect x="1.6" y="4" width="3.5" height="4.5" fill="#3c3f41"/><g fill="#3f9be0"><rect x="6" y="4" width="1.5" height="1.5"/><rect x="8" y="4" width="1.5" height="1.5"/><rect x="6" y="6.2" width="1.5" height="1.5"/><rect x="8" y="6.2" width="1.5" height="1.5"/><rect x="4" y="8.6" width="1.5" height="1.5"/><rect x="6" y="8.6" width="1.5" height="1.5"/><rect x="8" y="8.6" width="1.5" height="1.5"/></g></svg>
<svg class="ic" style="left:947px;top:34.5px" width="10" height="10" viewBox="0 0 10 10"><circle cx="4" cy="4" r="3.1" fill="none" stroke="#b8bcbe" stroke-width="1.2"/><path d="M6.3,6.3 L9.3,9.3" stroke="#b8bcbe" stroke-width="1.4"/></svg>
<!-- gutter icons -->
<svg class="ic" style="left:46.8px;top:79.8px" width="11" height="12" viewBox="0 0 11 12"><circle cx="3.8" cy="6.4" r="3.7" fill="#4a98e4"/><circle cx="3.8" cy="6.4" r="1.5" fill="none" stroke="#c8a078" stroke-width="0.9"/><path d="M8.6,1.5 V11" stroke="#e08a30" stroke-width="1.1"/><path d="M6.6,2.8 L8.6,0.3 L10.6,2.8 Z" fill="#e08a30"/></svg>
<span class="abs" style="left:72.3px;top:78.6px;font-size:10.5px;line-height:13px;color:#b4b4b4;font-family:'Liberation Sans',sans-serif">@</span>
<span class="abs" style="left:72.3px;top:146.2px;font-size:10.5px;line-height:13px;color:#b4b4b4;font-family:'Liberation Sans',sans-serif">@</span>
<!-- editor right: checkmark, scrollbar, stripe marks -->
<svg class="ic" style="left:938.6px;top:64.6px" width="8" height="6" viewBox="0 0 8 6"><path d="M0.6,2.6 L3,4.8 L7.2,0.6" fill="none" stroke="#3fb84f" stroke-width="1.4"/></svg>
<div class="abs" style="left:941.2px;top:130.8px;width:5.2px;height:21.8px;background:#5a5c5e"></div>
<div class="abs" style="left:938.5px;top:133.5px;width:8.5px;height:1.1px;background:#2f7a22"></div>
<div class="abs" style="left:938.5px;top:174.3px;width:8.5px;height:1.3px;background:#2c6a1c"></div>
<div class="abs" style="left:938.5px;top:181px;width:8.5px;height:1.3px;background:#2c6a1c"></div>
<div class="abs" style="left:938.5px;top:187.3px;width:8.5px;height:1.3px;background:#2c6a1c"></div>
<div class="abs" style="left:938.5px;top:195.3px;width:8.5px;height:1.3px;background:#2c6a1c"></div>
<div class="abs" style="left:938.5px;top:211.2px;width:8.5px;height:1.3px;background:#2c6a1c"></div>
<!-- left strip icons -->
<svg class="ic" style="left:3px;top:88.8px" width="9" height="8" viewBox="0 0 9 8"><rect x="0.4" y="0.2" width="7.6" height="2.6" fill="#a8acae"/><rect x="1.6" y="2.8" width="3" height="4" fill="#a8acae"/><rect x="5" y="4.6" width="3.4" height="3" fill="#1e1e1e"/><rect x="6" y="6.4" width="1.4" height="0.7" fill="#ddd"/></svg>
<svg class="ic" style="left:3.5px;top:150.5px" width="8" height="8" viewBox="0 0 8 8"><rect x="0" y="0.3" width="3" height="2.2" fill="#e08a30"/><rect x="4.4" y="0.3" width="3" height="2.2" fill="#8a8e90"/><rect x="0" y="3" width="3" height="2.2" fill="#8a8e90"/><rect x="4.4" y="3" width="3" height="2.2" fill="#8a8e90"/><rect x="0" y="5.7" width="3" height="2.2" fill="#8a8e90"/><rect x="4.4" y="5.7" width="3" height="2.2" fill="#8a8e90"/></svg>
<svg class="ic" style="left:3.5px;top:980px" width="9" height="9" viewBox="0 0 9 9"><path d="M0.3,4.5 L7.4,0.3 L8.6,2 L3.6,6.8 Z" fill="#8fc43f"/><path d="M0.3,4.5 L1.2,6.8 L3.6,6.8 Z" fill="#5e9e3e"/><rect x="4.6" y="5.6" width="3.6" height="3" fill="#d8d8d8"/></svg>
<svg class="ic" style="left:3.4px;top:1040.8px" width="8" height="8" viewBox="0 0 8 8"><path d="M4,0.2 L5.2,2.8 L7.9,3.1 L5.9,5 L6.5,7.8 L4,6.4 L1.5,7.8 L2.1,5 L0.1,3.1 L2.8,2.8 Z" fill="#d98a3a"/><circle cx="5" cy="3.3" r="0.7" fill="#e85a6a"/></svg>
<!-- right strip icons -->
<svg class="ic" style="left:950.5px;top:55.5px" width="7" height="8" viewBox="0 0 7 8"><ellipse cx="3.5" cy="4.4" rx="1.8" ry="3" fill="#a0a4a6"/><path d="M0.3,0.5 L2.4,2.6 M6.7,0.5 L4.6,2.6 M0.2,4.2 H1.6 M6.8,4.2 H5.4 M0.4,7.6 L2,6.2 M6.6,7.6 L5,6.2" stroke="#a0a4a6" stroke-width="0.7"/></svg>
<svg class="ic" style="left:950px;top:110.5px" width="8" height="9" viewBox="0 0 8 9"><rect x="0.4" y="0.3" width="7.2" height="8.2" rx="2" fill="#3f9bd0"/><path d="M0.4,2.8 H7.6 M0.4,5.4 H7.6" stroke="#2a6a90" stroke-width="0.7"/></svg>
<span class="abs" style="left:949.6px;top:164px;font:italic bold 10.5px/11px 'Liberation Sans',sans-serif;color:#48a8e0">m</span>
<!-- bottom tool bar icons -->
<svg class="ic" style="left:19px;top:1059px" width="9" height="9" viewBox="0 0 9 9"><circle cx="2.6" cy="2.4" r="2.2" fill="#d0d4d6"/><circle cx="5.6" cy="4" r="2.4" fill="#c8ccce"/><rect x="3" y="5.2" width="5" height="2" fill="#e06a5a"/><rect x="3.4" y="7.2" width="4.2" height="1.6" fill="#3f9be0"/><circle cx="2.6" cy="2.4" r="0.9" fill="#555"/></svg>
<svg class="ic" style="left:71px;top:1059px" width="9" height="9" viewBox="0 0 9 9"><circle cx="2" cy="2" r="1.9" fill="#3f9be0"/><circle cx="7" cy="2.2" r="1.5" fill="#a8acb0"/><circle cx="4.5" cy="7.3" r="1.5" fill="#a8acb0"/><path d="M2,2.5 L4.5,7.3 L7,2.2" fill="none" stroke="#a8acb0" stroke-width="0.9"/></svg>
<svg class="ic" style="left:156.5px;top:1060px" width="8" height="7" viewBox="0 0 8 7"><rect x="0" y="0" width="7.6" height="6.6" fill="#1e1e1e" stroke="#9a9ea0" stroke-width="0.8"/><path d="M1.5,2 L3,3.3 L1.5,4.6 M3.8,4.8 H6" stroke="#d8d8d8" stroke-width="0.7" fill="none"/></svg>
<svg class="ic" style="left:211px;top:1059.5px" width="9" height="9" viewBox="0 0 9 9"><rect x="0.6" y="0.6" width="7.4" height="7.4" rx="1" fill="#a8b0b8"/><rect x="2" y="2" width="4.6" height="2" fill="#3f7ed0"/><rect x="2" y="4.6" width="4.6" height="2" fill="#e07a4a"/></svg>
<svg class="ic" style="left:819px;top:1058.8px" width="11" height="10" viewBox="0 0 11 10"><path d="M1,4.5 A4.2,3.8 0 1 1 4,8 L1.5,9.5 L2.2,7.2 A4,3.8 0 0 1 1,4.5 Z" fill="none" stroke="#a8acae" stroke-width="0.9"/></svg>
<svg class="ic" style="left:879.5px;top:1059px" width="9" height="9" viewBox="0 0 9 9"><path d="M0.3,4.5 L7.4,0.3 L8.6,2 L3.6,6.8 Z" fill="#8fc43f"/><path d="M0.3,4.5 L1.2,6.8 L3.6,6.8 Z" fill="#5e9e3e"/><rect x="4.6" y="5.6" width="3.6" height="3" fill="#d8d8d8"/></svg>
<!-- status bar icons -->
<svg class="ic" style="left:5px;top:1072.3px" width="9" height="9" viewBox="0 0 9 9"><rect x="0.5" y="0.5" width="8" height="8" fill="#4e5254" stroke="#8a8e90" stroke-width="0.9"/><rect x="1.8" y="5.5" width="5.4" height="1.8" fill="#76797b"/></svg>
<svg class="ic" style="left:852.4px;top:1074.3px" width="4" height="6" viewBox="0 0 4 6"><path d="M0.3,2.3 L2,0.3 L3.7,2.3 Z M0.3,3.7 L2,5.7 L3.7,3.7 Z" fill="#a8a8a8"/></svg>
<svg class="ic" style="left:903.6px;top:1074.3px" width="4" height="6" viewBox="0 0 4 6"><path d="M0.3,2.3 L2,0.3 L3.7,2.3 Z M0.3,3.7 L2,5.7 L3.7,3.7 Z" fill="#a8a8a8"/></svg>
<svg class="ic" style="left:920.5px;top:1073.5px" width="5" height="7" viewBox="0 0 5 7"><rect x="0.2" y="3" width="4.6" height="3.6" fill="#a8acae"/><path d="M1.2,3 V1.8 a1.3,1.3 0 0 1 2.6,0 V3" fill="none" stroke="#a8acae" stroke-width="0.8"/></svg>
<svg class="ic" style="left:934.5px;top:1073px" width="7" height="8" viewBox="0 0 7 8"><circle cx="3.4" cy="3" r="2.6" fill="none" stroke="#9a9ea0" stroke-width="0.8"/><path d="M0.8,7.6 A2.8,3 0 0 1 6,7.6" fill="none" stroke="#9a9ea0" stroke-width="0.8"/></svg>
<svg class="ic" style="left:948px;top:1073px" width="8" height="8" viewBox="0 0 8 8"><path d="M7.4,4 A3.4,3.4 0 1 1 6.4,1.6" fill="none" stroke="#e0483a" stroke-width="1.3"/><path d="M1.6,6.4 A3.4,3.4 0 0 1 0.6,4" fill="none" stroke="#f4b400" stroke-width="1.3"/><path d="M1.6,6.4 A3.4,3.4 0 0 0 6.4,6.4" fill="none" stroke="#34a853" stroke-width="1.3"/><path d="M4,4 H7.4 A3.4,3.4 0 0 1 6.4,6.4" fill="none" stroke="#4285f4" stroke-width="1.3"/></svg>

<div class="note" style="left:439px;top:176px;width:177px;height:17.4px;padding:3.8px 0 0 6px">对key进行散列<span class="cm">，</span>获取哈希值</div>
<div class="note" style="left:521.5px;top:210.3px;width:159.8px;height:17.2px;padding:3.9px 0 0 5px">当表为null时<span class="cm">，</span>进行初始化</div>
<div class="note" style="left:734.5px;top:247.5px;width:125.8px;height:50.8px;padding:3.7px 0 0 5.5px">如果这个哈希值直接可<br>以存到数组<span class="cm">，</span>就直接插<br>入进去<span style="color:#f00">(不用加锁)</span></div>
<div class="note" style="left:472.5px;top:325.8px;width:251.2px;height:32px;padding:4.4px 0 0 5.8px">插入的位置是表的链接点时<span class="cm">，</span>那就表明在扩容<span class="cm">，</span><br>帮助当前线程扩容</div>
<div class="note" style="left:395.4px;top:368.3px;width:128.6px;height:17.25px;padding:3.65px 0 0 5.6px">加锁</div>
<div class="note" style="left:744.4px;top:448.8px;width:55.4px;height:66.35px;padding:4.05px 0 0 5.6px">节点的方<br>式处理</div>
<div class="note" style="left:718px;top:671.3px;width:84.25px;height:42.55px;padding:3.95px 0 0 5.75px">按照树的方式<br>插入</div>
<div class="note" style="left:561.9px;top:833.1px;width:136.9px;height:34.6px;padding:3.7px 0 0 4.8px">链表长度大于8<span class="cm">，</span>把链表<br>结构转成树形结构</div>
<div class="note" style="left:121.9px;top:418.2px;width:22.3px;height:163px;padding:74.3px 2px 0 0;text-align:center;line-height:15.5px">处<br>理<br>散<br>列<br>冲<br>突</div>
<svg id="ov" class="abs" width="960" height="1083" viewBox="0 0 960 1083">
<path d="M150,187.4 H378" stroke="#1fc3cd" stroke-width="1.6"/>
<rect x="177.5" y="228.9" width="296.5" height="25.5" fill="none" stroke="#671a6f" stroke-width="1.6"/>
<rect x="204.3" y="267.6" width="465.7" height="51.6" fill="none" stroke="#22c322" stroke-width="1.5"/>
<rect x="177.5" y="321.8" width="236.3" height="30.9" fill="none" stroke="#6868b8" stroke-width="1.8"/>
<rect x="105.5" y="362.8" width="716.3" height="578.8" fill="none" stroke="#117a7a" stroke-width="1.3"/>
<rect x="198.8" y="375.7" width="159.2" height="14.7" fill="none" stroke="#1fc3cd" stroke-width="1.6"/>
<rect x="249.3" y="672.8" width="395.7" height="136.9" fill="none" stroke="#0a0a78" stroke-width="1.8"/>
<rect x="254.4" y="405.8" width="434.9" height="268.6" fill="none" stroke="#66c80a" stroke-width="1.6"/>
<rect x="192.5" y="836" width="294.5" height="95.3" fill="none" stroke="#c4126a" stroke-width="1.6"/>
<path d="M438.6,191.2 L396.5,185.3" stroke="#d60f0f" stroke-width="1.2" fill="none"/>
<path d="M387.6,184 L396.9,182.3 L396.1,188.2 Z" fill="#e01010"/>
<path d="M518.3,222 L490.8,230.9" stroke="#d60f0f" stroke-width="1.2" fill="none"/>
<path d="M482.2,233.7 L489.8,228.1 L491.7,233.8 Z" fill="#e01010"/>
<path d="M714.5,268.8 L688.8,283.5" stroke="#d60f0f" stroke-width="1.2" fill="none"/>
<path d="M681,288 L687.3,280.9 L690.3,286.1 Z" fill="#e01010"/>
<path d="M469,347.5 L427.9,343.0" stroke="#d60f0f" stroke-width="1.2" fill="none"/>
<path d="M419,342 L428.3,340.0 L427.6,346.0 Z" fill="#e01010"/>
<path d="M390,376.7 L374.6,380.4" stroke="#d60f0f" stroke-width="1.2" fill="none"/>
<path d="M365.8,382.5 L373.9,377.5 L375.3,383.3 Z" fill="#e01010"/>
<path d="M741.7,477.7 L711.8,496.5" stroke="#d60f0f" stroke-width="1.2" fill="none"/>
<path d="M704.2,501.3 L710.2,494.0 L713.4,499.0 Z" fill="#e01010"/>
<path d="M708,705 L670.6,723.1" stroke="#d60f0f" stroke-width="1.2" fill="none"/>
<path d="M662.5,727 L669.3,720.4 L671.9,725.8 Z" fill="#e01010"/>
<path d="M551.7,863.5 L507.9,874.8" stroke="#d60f0f" stroke-width="1.2" fill="none"/>
<path d="M499.2,877 L507.2,871.9 L508.7,877.7 Z" fill="#e01010"/>
</svg>
</div>
</body>
</html>
